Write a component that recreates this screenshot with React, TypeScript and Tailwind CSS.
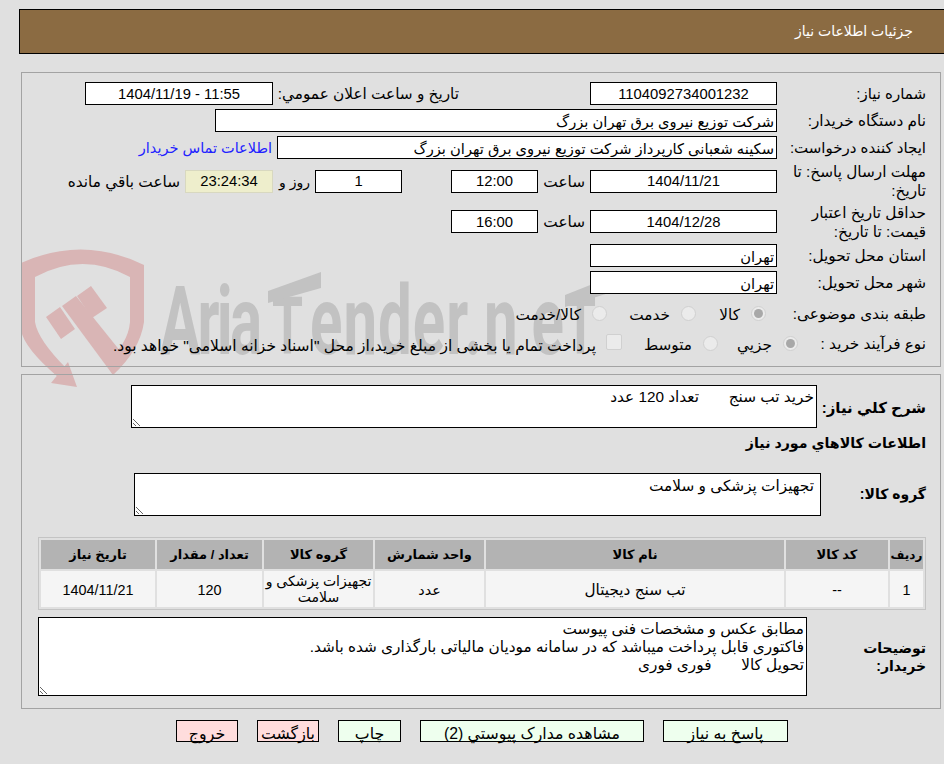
import React from "react";

const inputCls = "h-[23px] border border-black bg-white text-center text-[14.8px] text-black outline-none";
const textInputCls = "h-[23px] border border-black bg-white px-[2px] pt-[1px] text-right text-[14.7px] text-black outline-none";
const boxCls = "border border-black bg-white px-[2px] pt-[2px] text-[15.3px] leading-[18px] text-black outline-none";
const thCls = "h-[29px] bg-[#b3b3b3] text-center text-[13px] font-bold text-black";
const tdCls = "h-[36px] bg-[#f5f5f5] pt-[2px] text-center text-[14.4px] leading-[16px] text-black";
const btnCls = "border border-black pt-[1px] text-[15.8px]";

// logo watermark sitting behind the first panel
function Watermark() {
  const wmText = { direction: "ltr", fill: "#c2c2c2", fontFamily: "Roboto, sans-serif", fontWeight: 700, lengthAdjust: "spacingAndGlyphs" } as const;
  return (
    <svg className="absolute left-0 top-0 z-0" width="944" height="400" viewBox="0 0 944 400">
      <g fill="#d9b5b5">
        <path d="M21 263 Q83 235 144 265 L144 322 Q140 350 113 375 L105 362 Q128 345 130 322 L130 277 Q83 251 35 277 L35 322 Q38 340 66 368 L58 377 Q24 348 21 330 Z" />
        <polygon points="68,362 77,387 51,383" />
        <polygon points="46,317 60,307 75,329 61,339" />
        <polygon points="77,296 91,286 107,308 92,318" />
        <polygon points="62,306 76,296 125,357 113,375" />
      </g>
      <g {...wmText} transform="translate(0 354) scale(1 1.6)">
        <text x="160" y="0" fontSize="60" textLength="102">Aria</text>
        <text x="272" y="0" fontSize="50" textLength="50">T</text>
        <text x="310" y="0" fontSize="60" textLength="172">ender.</text>
        <text x="484" y="0" fontSize="60" textLength="80">ne</text>
        <text x="565" y="0" fontSize="50" textLength="50">T</text>
      </g>
      <polygon fill="#c2c2c2" points="268,291 321,272 321,288 268,303" />
      <polygon fill="#c2c2c2" points="565,295 618,274 618,290 565,307" />
    </svg>
  );
}

function Radio({ checked }: { checked?: boolean }) {
  return (
    <span className="flex h-[15px] w-[15px] shrink-0 items-center justify-center rounded-full border border-[#d0d0d0] bg-[#ebebeb]">
      {checked && <span className="h-[9px] w-[9px] rounded-full bg-[#a8a8a8]" />}
    </span>
  );
}

export default function App() {
  return (
    <div
      dir="rtl"
      className="relative h-[764px] w-[944px] overflow-hidden bg-[#e0e0e0] text-[15.3px] text-black"
      style={{ fontFamily: '"Liberation Sans", "DejaVu Sans", sans-serif' }}
    >
      <Watermark />
      <div className="relative z-10 pt-[9px]">
        <div className="ml-[19px] flex h-[45px] items-center border border-r-0 border-black bg-[#8b6b42] pr-[31px] text-[14px] text-white">
          جزئیات اطلاعات نیاز
        </div>

        <div className="ml-[21px] mr-[3px] mt-[18px] h-[295px] border border-[#a3a3a3] pr-[14px] pt-[9px]">
          <div className="flex h-[23px] items-center">
            <div className="w-[149px] shrink-0 pt-[2px] text-[15px]">شماره نیاز:</div>
            <input readOnly value="1104092734001232" className={`${inputCls} w-[187px]`} />
            <div className="mr-[131px] w-[186px] shrink-0 whitespace-nowrap pt-[2px]">تاریخ و ساعت اعلان عمومي:</div>
            <input readOnly value="1404/11/19 - 11:55" dir="ltr" className={`${inputCls} w-[188px]`} />
          </div>
          <div className="mt-[4px] flex h-[23px] items-center">
            <div className="w-[149px] shrink-0 pt-[2px]">نام دستگاه خریدار:</div>
            <input readOnly value="شرکت توزیع نیروی برق تهران بزرگ" className={`${textInputCls} w-[562px]`} />
          </div>
          <div className="mt-[4px] flex h-[23px] items-center">
            <div className="w-[149px] shrink-0 whitespace-nowrap pt-[2px] text-[15px]">ایجاد کننده درخواست:</div>
            <input readOnly value="سکینه شعبانی کارپرداز شرکت توزیع نیروی برق تهران بزرگ" className={`${textInputCls} w-[500px]`} />
            <a className="mr-[5px] whitespace-nowrap pt-[2px] text-[14.5px] text-[#2222ff]">اطلاعات تماس خریدار</a>
          </div>

          <div className="mt-[5px] flex h-[34px] items-center">
            <div className="w-[149px] shrink-0 pl-[8px] leading-[19px]">مهلت ارسال پاسخ: تا تاریخ:</div>
            <input readOnly value="1404/11/21" className={`${inputCls} w-[187px]`} />
            <div className="w-[52px] shrink-0 pr-[5px] pt-[2px]">ساعت</div>
            <input readOnly value="12:00" className={`${inputCls} w-[87px]`} />
            <div className="w-[49px] shrink-0" />
            <input readOnly value="1" className={`${inputCls} w-[87px]`} />
            <div className="w-[42px] shrink-0 whitespace-nowrap pr-[5px] pt-[2px] text-[14px]">روز و</div>
            <div className="flex h-[23px] w-[88px] items-center justify-center border border-[#d8d8c0] bg-[#eeeecc] text-[14.8px]">23:24:34</div>
            <div className="whitespace-nowrap pr-[5px] pt-[2px]">ساعت باقي مانده</div>
          </div>

          <div className="mt-[6px] flex h-[35px] items-center">
            <div className="w-[149px] shrink-0 pl-[8px] leading-[19px]">حداقل تاریخ اعتبار قیمت: تا تاریخ:</div>
            <input readOnly value="1404/12/28" className={`${inputCls} w-[187px]`} />
            <div className="w-[52px] shrink-0 pr-[5px] pt-[2px]">ساعت</div>
            <input readOnly value="16:00" className={`${inputCls} w-[87px]`} />
          </div>

          <div className="mt-[5px] flex h-[23px] items-center">
            <div className="w-[149px] shrink-0 pt-[2px]">استان محل تحویل:</div>
            <input readOnly value="تهران" className={`${textInputCls} w-[187px]`} />
          </div>
          <div className="mt-[4px] flex h-[23px] items-center">
            <div className="w-[149px] shrink-0 pt-[2px]">شهر محل تحویل:</div>
            <input readOnly value="تهران" className={`${textInputCls} w-[187px]`} />
          </div>

          <div className="mt-[7px] flex h-[24px] items-center">
            <div className="w-[160px] shrink-0 pt-[2px]">طبقه بندی موضوعی:</div>
            <Radio checked />
            <div className="mr-[11px] w-[44px] pt-[5px]">کالا</div>
            <Radio />
            <div className="mr-[11px] w-[63px] pt-[5px]">خدمت</div>
            <Radio />
            <div className="mr-[11px] whitespace-nowrap pt-[5px]">کالا/خدمت</div>
          </div>
          <div className="mt-[6px] flex h-[24px] items-center">
            <div className="w-[128px] shrink-0 pt-[2px]">نوع فرآیند خرید :</div>
            <Radio checked />
            <div className="mr-[11px] w-[54px] pt-[5px]">جزیي</div>
            <Radio />
            <div className="mr-[11px] w-[70px] pt-[5px]">متوسط</div>
            <span className="-mt-[2px] h-[16px] w-[16px] shrink-0 rounded-[2px] border border-[#d0d0d0] bg-[#ebebeb]" />
            <div className="mr-[10px] whitespace-nowrap pt-[5px] text-[15.5px]">پرداخت تمام یا بخشی از مبلغ خرید،از محل "اسناد خزانه اسلامی" خواهد بود.</div>
          </div>
        </div>

        <div className="ml-[21px] mr-[3px] mt-[7px] h-[335px] border border-[#a3a3a3] pr-[14px] pt-[10px]">
          <div className="flex h-[43px] items-center">
            <div className="w-[109px] shrink-0 pt-[3px] text-[15px] font-bold">شرح کلي نیاز:</div>
            <textarea readOnly defaultValue="خرید تب سنج       تعداد 120 عدد" className={`${boxCls} h-[43px] w-[686px]`} />
          </div>
          <div className="mt-[6px] text-[14.2px] font-bold leading-[18px]">اطلاعات کالاهاي مورد نیاز</div>
          <div className="mt-[21px] flex h-[43px] items-center">
            <div className="w-[105px] shrink-0 text-[14px] font-bold">گروه کالا:</div>
            <textarea readOnly defaultValue="تجهیزات پزشکی و سلامت" className={`${boxCls} h-[43px] w-[687px] pr-[6px] pt-[3px]`} />
          </div>

          <table className="mt-[21px] w-[888px] table-fixed border-separate border-spacing-[2px] border border-[#c4c4c4]">
            <colgroup>
              <col className="w-[33px]" />
              <col className="w-[102px]" />
              <col className="w-[298px]" />
              <col className="w-[109px]" />
              <col className="w-[109px]" />
              <col className="w-[105px]" />
              <col />
            </colgroup>
            <thead>
              <tr>
                <th className="h-[29px] bg-[#b3b3b3] text-center text-[12px] font-bold text-black">ردیف</th>
                <th className={thCls}>کد کالا</th>
                <th className={thCls}>نام کالا</th>
                <th className={thCls}>واحد شمارش</th>
                <th className={thCls}>گروه کالا</th>
                <th className={thCls}>تعداد / مقدار</th>
                <th className={thCls}>تاریخ نیاز</th>
              </tr>
            </thead>
            <tbody>
              <tr>
                <td className={tdCls}>1</td>
                <td className={tdCls}>--</td>
                <td className="h-[36px] bg-[#f5f5f5] pt-[2px] text-center text-[15.3px] leading-[16px]">تب سنج دیجیتال</td>
                <td className={tdCls}>عدد</td>
                <td className="h-[36px] bg-[#f5f5f5] text-center text-[14px] leading-[16px]">تجهیزات پزشکی و سلامت</td>
                <td className={tdCls}>120</td>
                <td className={tdCls}>1404/11/21</td>
              </tr>
            </tbody>
          </table>

          <div className="mt-[7px] flex h-[79px] items-center">
            <div className="w-[119px] shrink-0 pl-[30px] text-[14px] font-bold leading-[18px]">توضیحات خریدار:</div>
            <textarea
              readOnly
              defaultValue={"مطابق عکس و مشخصات فنی پیوست\nفاکتوری قابل پرداخت میباشد که در سامانه مودیان مالیاتی بارگذاری شده باشد.\nتحویل کالا       فوری فوری"}
              className={`${boxCls} h-[79px] w-[769px]`}
            />
          </div>
        </div>

        <div className="mr-[156px] mt-[11px] flex h-[22px] gap-[19px]">
          <button className={`${btnCls} w-[125px] bg-[#eeffee]`}>پاسخ به نیاز</button>
          <button className={`${btnCls} w-[224px] bg-[#eeffee]`}>مشاهده مدارک پیوستي (2)</button>
          <button className={`${btnCls} w-[63px] bg-[#eeffee]`}>چاپ</button>
          <button className={`${btnCls} w-[62px] bg-[#ffdddd]`}>بازگشت</button>
          <button className={`${btnCls} w-[62px] bg-[#ffdddd]`}>خروج</button>
        </div>
      </div>
    </div>
  );
}
